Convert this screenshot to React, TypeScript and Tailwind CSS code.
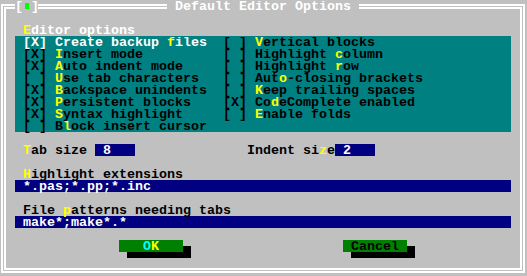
type Item = { text: string; hot: number; on: boolean };

const leftItems: Item[] = [
  { text: "Create backup files", hot: 14, on: true },
  { text: "Insert mode", hot: 0, on: true },
  { text: "Auto indent mode", hot: 0, on: true },
  { text: "Use tab characters", hot: 0, on: false },
  { text: "Backspace unindents", hot: 0, on: true },
  { text: "Persistent blocks", hot: 0, on: true },
  { text: "Syntax highlight", hot: 0, on: true },
  { text: "Block insert cursor", hot: 1, on: false },
];

const rightItems: Item[] = [
  { text: "Vertical blocks", hot: 0, on: false },
  { text: "Highlight column", hot: 10, on: false },
  { text: "Highlight row", hot: 10, on: false },
  { text: "Auto-closing brackets", hot: 3, on: false },
  { text: "Keep trailing spaces", hot: 0, on: false },
  { text: "CodeComplete enabled", hot: 2, on: true },
  { text: "Enable folds", hot: 0, on: false },
];

function Hot({ text, at, tone }: { text: string; at: number; tone: string }) {
  return (
    <span className={tone}>
      {text.slice(0, at)}
      <span className="text-[#ffff00]">{text[at]}</span>
      {text.slice(at + 1)}
    </span>
  );
}

function Check({ item, focused }: { item: Item; focused?: boolean }) {
  const tone = focused ? "text-white" : "text-black";
  return (
    <div className="h-[12px]">
      <span className={tone}>{item.on ? "[X] " : "[ ] "}</span>
      <Hot text={item.text} at={item.hot} tone={tone} />
    </div>
  );
}

function Button({ children }: { children: React.ReactNode }) {
  return (
    <div className="relative h-[12px] w-[64px]">
      <div className="absolute left-[8px] top-[6px] h-[12px] w-[64px] bg-black" />
      <div className="relative flex h-[12px] w-[64px] justify-center bg-[#008000]">{children}</div>
    </div>
  );
}

export default function App() {
  return (
    <div className="relative h-[276px] w-[527px] overflow-hidden whitespace-pre bg-[#c0c0c0] pl-[1px] pt-[4px] font-['Liberation_Mono',monospace] text-[13.33px] font-bold leading-[14px] text-black">
      <div className="h-[269px] w-[524px] border-2 border-white p-[1px]">
        <div className="h-full border-2 border-white pl-[9px] pt-[3px]">
          <div className="w-[496px]">
            <div className="h-[12px]" />
            <div className="h-[12px] pl-[8px]">
              <Hot text="Editor options" at={0} tone="text-white" />
            </div>
            <div className="flex bg-[#008080] pl-[8px]">
              <div className="w-[200px]">
                {leftItems.map((it, i) => (
                  <Check key={it.text} item={it} focused={i === 0} />
                ))}
              </div>
              <div>
                {rightItems.map((it) => (
                  <Check key={it.text} item={it} />
                ))}
              </div>
            </div>
            <div className="h-[12px]" />
            <div className="flex h-[12px] pl-[8px]">
              <Hot text="Tab size " at={0} tone="text-black" />
              <div className="w-[40px] bg-[#000080] pl-[8px] text-white">8</div>
              <div className="ml-[112px]">
                <Hot text="Indent size" at={9} tone="text-black" />
              </div>
              <div className="w-[40px] bg-[#000080] pl-[8px] text-white">2</div>
            </div>
            <div className="h-[12px]" />
            <div className="h-[12px] pl-[8px]">
              <Hot text="Highlight extensions" at={0} tone="text-black" />
            </div>
            <div className="h-[12px] bg-[#000080] pl-[8px] text-white">*.pas;*.pp;*.inc</div>
            <div className="h-[12px]" />
            <div className="h-[12px] pl-[8px]">
              <Hot text="File patterns needing tabs" at={5} tone="text-black" />
            </div>
            <div className="h-[12px] bg-[#000080] pl-[8px] text-white">make*;make*.*</div>
            <div className="h-[12px]" />
            <div className="flex h-[12px] pl-[104px]">
              <Button>
                <span className="text-[#00ffff]">O</span>
                <span className="text-[#ffff00]">K</span>
              </Button>
              <div className="ml-[160px]">
                <Button>
                  <span className="text-black">Cancel</span>
                </Button>
              </div>
            </div>
          </div>
        </div>
      </div>
      <div className="absolute left-[15px] top-0 flex h-[12px] w-[23px] bg-[#c0c0c0] text-white">
        <span>[</span>
        <span className="flex w-[8px] pl-[2px] pt-[3px]">
          <span className="h-[6px] w-[4px] bg-[#00ff00]" />
        </span>
        <span className="w-[7px]">]</span>
      </div>
      <div className="absolute left-[167px] top-0 h-[12px] bg-[#c0c0c0] text-white">
        {" Default Editor Options "}
      </div>
    </div>
  );
}
